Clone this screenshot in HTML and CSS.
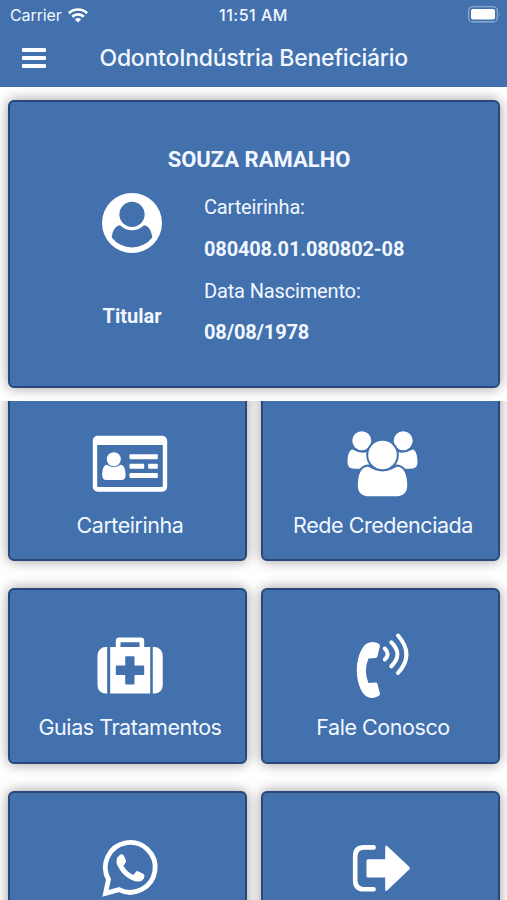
FILE: index.html
```
<!DOCTYPE html>
<html lang="pt-BR">

<head>
  <meta charset="utf-8">
  <title>OdontoIndústria Beneficiário</title>
  <meta name="viewport" content="width=device-width, initial-scale=1">
  <link rel="stylesheet" href="styles.css">
</head>

<body>
  <header class="header">
    <div class="status">
      <div class="carrier">
        <span>Carrier</span>
        <svg width="20" height="15" viewBox="0 0 20 15" fill="none" stroke="#fff" stroke-width="2.7">
          <path d="M.9 5.2a13 13 0 0 1 18.2 0M4.2 8.7a8.3 8.3 0 0 1 11.6 0" />
          <path d="M10 14.6L6.9 11.5a4.6 4.6 0 0 1 6.2 0z" fill="#fff" stroke="none" />
        </svg>
      </div>
      <span class="time">11:51 AM</span>
      <svg class="battery" width="33" height="17" viewBox="0 0 33 17">
        <rect x=".7" y=".7" width="28.6" height="15.2" rx="4.2" fill="none" stroke="#9bb5d6" stroke-width="1.1" />
        <rect x="3" y="3" width="24" height="10.6" rx="2" fill="#fff" />
        <path d="M31 6.2q1.6 2.1 0 4.2z" fill="#9bb5d6" />
      </svg>
    </div>
    <div class="navbar">
      <div class="menu">
        <i></i>
        <i></i>
        <i></i>
      </div>
      <h1>OdontoIndústria Beneficiário</h1>
    </div>
  </header>

  <section class="profile">
    <div class="card">
      <h2>SOUZA RAMALHO</h2>
      <div class="info">
        <div class="type">
          <svg width="60" height="60" viewBox="0 0 60 60">
            <circle cx="30" cy="30" r="30" fill="#fff" />
            <circle cx="30" cy="21.4" r="12.6" fill="#4271ae" />
            <path d="M18 32.2q5 5 12 5t12-5c5 .7 7.6 6 8.3 12.3A25.600 25.600 0 0 1 9.7 44.5C10.4 38.2 13 32.9 18 32.2z" fill="#4271ae" />
          </svg>
          <strong>Titular</strong>
        </div>
        <div class="data">
          <p>Carteirinha:</p>
          <p><strong>080408.01.080802-08</strong></p>
          <p>Data Nascimento:</p>
          <p><strong>08/08/1978</strong></p>
        </div>
      </div>
    </div>
  </section>

  <main class="scroll">
    <div class="grid">
      <div class="tile">
        <svg viewBox="0 0 80 80">
          <path fill-rule="evenodd" d="M7.8 10.7h64.4a5 5 0 0 1 5 5v46a5 5 0 0 1-5 5H7.8a5 5 0 0 1-5-5v-46a5 5 0 0 1 5-5zM7.2 20v41q0 1 1 1h63.6q1 0 1-1V20z" />
          <circle cx="23.8" cy="34.3" r="7" />
          <path d="M17 39.7q6.8 4.6 13.6 0c3.6.3 5 5 5 10.5q0 4.800-4 4.800H16.2q-4 0-4-4.800c0-5.500 1.200-10.200 4.800-10.500z" />
          <rect x="39.5" y="29.3" width="28.3" height="5" rx="1" />
          <rect x="39.5" y="38.7" width="14.7" height="5" rx="1" />
          <rect x="58.2" y="38.7" width="9.6" height="5" rx="1" />
          <rect x="39.5" y="48" width="28.3" height="5" rx="1" />
        </svg>
        <span>Carteirinha</span>
      </div>
      <div class="tile">
        <svg viewBox="0 0 80 80">
          <circle cx="18.8" cy="15.7" r="9.5" />
          <circle cx="60.2" cy="15.7" r="9.5" />
          <path d="M9.5 24.5q9.3 5.5 18 1.5v14q-3 1-5 3.700H11.500q-7 0-7-6.200c0-5.500 1-12.500 5-13zM69.500 24.500q-9.300 5.500-18 1.500v14q3 1 5 3.700h11q7 0 7-6.200c0-5.500-1-12.500-5-13z" />
          <path class="cut" d="M25 40.400q14.500 9.600 29 0c8 .8 11.200 9.500 11.200 20.600 0 6.500-3.700 10.200-9.700 11.200h-32c-6-1-9.700-4.700-9.700-11.200 0-11.100 3.200-19.800 11.200-20.600z" />
          <circle class="cut" cx="39.5" cy="30" r="15.3" />
        </svg>
        <span>Rede Credenciada</span>
      </div>
      <div class="tile">
        <svg viewBox="0 0 80 80">
          <path d="M17.2 20v46.6h-1.500a8.200 8.200 0 0 1-8.200-8.200V28.200a8.200 8.200 0 0 1 8.200-8.200zM62.800 20v46.600h1.700a8.200 8.200 0 0 0 8.200-8.200V28.200a8.200 8.200 0 0 0-8.200-8.200z" />
          <path fill-rule="evenodd" d="M20.2 20h5.600v-6q0-3.400 3.400-3.400h21.600q3.400 0 3.400 3.400v6h6v46.600h-40zM30.500 15.300V20h19v-4.700zM36.200 29.300q-1 0-1 1v8.300h-8.400q-1 0-1 1V47q0 1 1 1h8.400v8.600q0 1 1 1h7.300q1 0 1-1V48h8.700q1 0 1-1v-7.400q0-1-1-1h-8.700v-8.300q0-1-1-1z" />
        </svg>
        <span>Guias Tratamentos</span>
      </div>
      <div class="tile">
        <svg viewBox="0 0 80 80">
          <path d="M36.3 17.300q1 .8.600 2l-2.500 10.300q-.3 1.200-1.600 1.300l-7.300.5q-5.200 12 0 24.500l7.200-.5q1.300 0 1.700 1.300l2.500 9.500q.4 1.400-.8 2.300c-3.800 3-9.500 3.200-13.300.5-5-3.600-9-14.500-9-25.700 0-11.300 4-22.300 9.300-26.200 3.800-2.700 9.200-2.900 13.200.2z" />
          <path class="wave" d="M41.800 21.500q5.700 5.500 0 11M48.300 15.300q12.200 12 0 24M55 8.500q16.800 19.200 0 37.500" />
        </svg>
        <span>Fale Conosco</span>
      </div>
      <div class="tile">
        <svg viewBox="0 0 80 80">
          <path class="bubble" d="M18.5 49.500A24.900 24.900 0 1 1 29 59.600L15.500 63.300z" />
          <path d="M30.400 24.500q2.500-.8 3.600 1.300l1.900 4.500q.5 1.500-.5 2.800l-2 2.600q3.600 6.500 9.900 9.300l2.700-3.300q.8-.9 2-.4l5.500 2.800q1.200.7.900 2.400-.8 4.200-4.800 5-3.200.6-8.500-1.800Q32.600 45.800 27.700 36q-3.600-7.300 2.700-11.500z" />
        </svg>
      </div>
      <div class="tile">
        <svg viewBox="0 0 80 80">
          <path class="bracket" d="M30.600 17.400H21q-8.800 0-8.800 8.800v24.300q0 8.800 8.800 8.800h9.600" />
          <path d="M25 29.300h17.200V17q0-2.600 2.200-.8l21.800 20.600q1.500 1.400 0 2.800L44.400 60.200q-2.200 1.800-2.200-.8V47.500H25q-1.500 0-1.500-1.500V30.800q0-1.500 1.500-1.500z" />
        </svg>
      </div>
    </div>
  </main>
</body>

</html>
```
FILE: styles.css
```
* {
  margin: 0;
  padding: 0;
  box-sizing: border-box;
}

body {
  display: flex;
  flex-direction: column;
  height: 900px;
  overflow: hidden;
  background: #fff;
  color: #f2f7ff;
  font-family: Inter, "Liberation Sans", sans-serif;
}

.header {
  flex: none;
  height: 87px;
  background: #4271ae;
}

.status {
  display: grid;
  grid-template-columns: 1fr auto 1fr;
  align-items: center;
  height: 30px;
  padding: 0 6px;
  font-size: 16px;
}

.carrier {
  display: flex;
  align-items: center;
  gap: 6px;
  padding-left: 4px;
  letter-spacing: -.1px;
}

.time {
  font-size: 16px;
  font-weight: 500;
  letter-spacing: .5px;
}

.battery {
  justify-self: end;
  margin-top: -2px;
}

.navbar {
  display: flex;
  align-items: center;
  height: 56px;
  padding-left: 22px;
}

.menu {
  display: flex;
  flex-direction: column;
  gap: 4px;
  width: 24px;
}

.menu i {
  height: 4px;
  border-radius: 1px;
  background: #fff;
}

.navbar h1 {
  margin-left: 53.5px;
  font-size: 23px;
  font-weight: 500;
  letter-spacing: -.24px;
  white-space: nowrap;
}

.profile {
  flex: none;
  height: 314px;
  padding: 13px 7px 13px 8px;
}

.card,
.tile {
  border: 2.500px solid #28487a;
  border-radius: 6px;
  background: #4271ae;
  box-shadow: 0 0 13px rgba(0, 0, 0, .4);
}

.card {
  height: 288px;
  padding-top: 44px;
  font-family: Roboto, sans-serif;
  font-size: 20px;
}

.card h2 {
  padding-left: 10px;
  font-size: 22px;
  line-height: 28px;
  text-align: center;
}

.info {
  display: flex;
}

.type {
  display: flex;
  flex-direction: column;
  align-items: center;
  width: 60px;
  margin: 19px 0 0 92px;
}

.type strong {
  margin-top: 51px;
}

.data {
  margin-left: 42px;
  padding-top: 13px;
  line-height: 41.8px;
  letter-spacing: -.15px;
}

.scroll {
  flex: 1;
  overflow: hidden;
}

.grid {
  display: grid;
  grid-template-columns: 239px 239px;
  grid-auto-rows: 175.4px;
  gap: 27px 14px;
  margin-top: -15px;
  padding-left: 8px;
}

.tile {
  display: flex;
  flex-direction: column;
  align-items: center;
  padding: 37px 0 0 5px;
  font-size: 21.5px;
  letter-spacing: -.45px;
}

.tile svg {
  flex: none;
  width: 80px;
  height: 80px;
  fill: #fff;
}

.tile span {
  margin-top: 6px;
  line-height: 28px;
  white-space: nowrap;
}

.tile .cut {
  stroke: #4271ae;
  stroke-width: 2;
}

.tile .wave,
.tile .bubble,
.tile .bracket {
  fill: none;
  stroke: #fff;
  stroke-width: 4;
  stroke-linecap: round;
}

.tile .bubble {
  stroke-width: 4.8;
}

.tile .bracket {
  stroke-width: 4.6;
}
```
